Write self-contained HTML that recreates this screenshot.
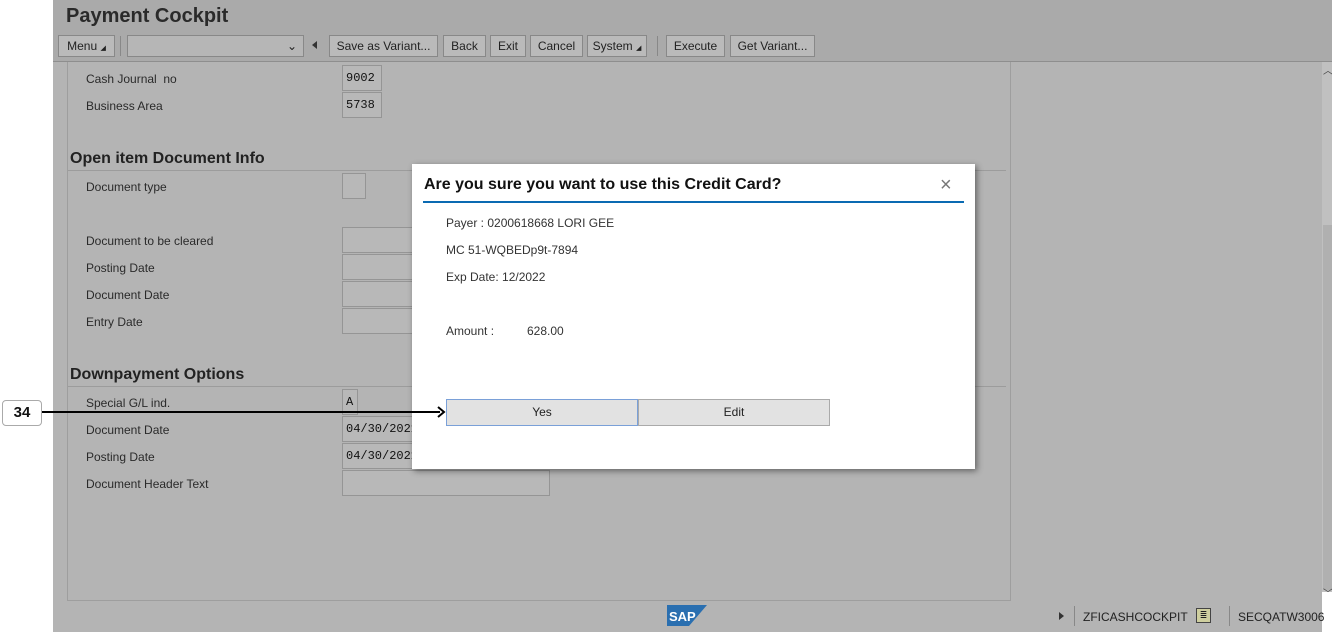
<!DOCTYPE html>
<html><head><meta charset="utf-8"><style>
*{margin:0;padding:0;box-sizing:border-box}
body{width:1332px;height:632px;position:relative;overflow:hidden;background:#fff;font-family:"Liberation Sans",Arial,sans-serif;font-size:12px;color:#222}
.a{position:absolute}
.hdr{left:53px;top:0;width:1279px;height:62px;background:#aaa;border-bottom:1px solid #8e8e8e}
.main{left:53px;top:62px;width:1269px;height:570px;background:#b4b4b4}
.btn{position:absolute;top:35px;height:22px;border:1px solid #888;background:#bababa;font-size:12px;line-height:20px;text-align:center;color:#222}
.lbl{position:absolute;left:86px;font-size:12px;color:#2a2a2a}
.inp{position:absolute;left:342px;height:26px;border:1px solid #959595;background:#b8b8b8;font-family:"Liberation Mono",monospace;font-size:12px;line-height:24px;padding-left:3px;color:#111}
.h{position:absolute;left:70px;font-size:16px;font-weight:bold;color:#222}
.hl{position:absolute;left:68px;width:938px;height:1px;background:#9c9c9c}
.dl{position:absolute;left:446px;font-size:12px;color:#333}
</style></head><body>
<div class="a hdr"></div>
<div class="a" style="left:66px;top:5px;font-size:20px;font-weight:bold;color:#2a2a2a">Payment Cockpit</div>
<div class="btn" style="left:58px;width:57px">Menu <span style="font-size:7px">◢</span></div>
<div class="a" style="left:120px;top:36px;width:1px;height:20px;background:#888"></div>
<div class="btn" style="left:127px;width:177px;background:#b6b6b6;text-align:right;padding-right:6px">⌄</div>
<div class="a" style="left:312px;top:41px;width:0;height:0;border-top:4px solid transparent;border-bottom:4px solid transparent;border-right:5px solid #333"></div>
<div class="btn" style="left:329px;width:109px">Save as Variant...</div>
<div class="btn" style="left:443px;width:43px">Back</div>
<div class="btn" style="left:490px;width:36px">Exit</div>
<div class="btn" style="left:530px;width:53px">Cancel</div>
<div class="btn" style="left:587px;width:60px">System <span style="font-size:7px">◢</span></div>
<div class="a" style="left:657px;top:36px;width:1px;height:20px;background:#888"></div>
<div class="btn" style="left:666px;width:59px">Execute</div>
<div class="btn" style="left:730px;width:85px">Get Variant...</div>
<div class="a main"></div>
<div class="a" style="left:67px;top:62px;width:944px;height:539px;border-left:1px solid #9e9e9e;border-right:1px solid #9e9e9e;border-bottom:1px solid #9e9e9e"></div>
<div class="a" style="left:1322px;top:62px;width:10px;height:530px;background:#c0c0c0"></div>
<div class="a" style="left:1323px;top:225px;width:9px;height:365px;background:#b0b0b0"></div>
<div class="a" style="left:1323px;top:62px;font-size:10px;color:#444">︿</div>
<div class="a" style="left:1323px;top:585px;font-size:10px;color:#444">﹀</div>
<div class="lbl" style="top:72px">Cash Journal &nbsp;no</div><div class="inp" style="top:65px;width:40px">9002</div>
<div class="lbl" style="top:99px">Business Area</div><div class="inp" style="top:92px;width:40px">5738</div>
<div class="h" style="top:150px">Open item Document Info</div><div class="hl" style="top:170px"></div>
<div class="lbl" style="top:180px">Document type</div><div class="inp" style="top:173px;width:24px"></div>
<div class="lbl" style="top:234px">Document to be cleared</div><div class="inp" style="top:227px;width:80px"></div>
<div class="lbl" style="top:261px">Posting Date</div><div class="inp" style="top:254px;width:80px"></div>
<div class="lbl" style="top:288px">Document Date</div><div class="inp" style="top:281px;width:80px"></div>
<div class="lbl" style="top:315px">Entry Date</div><div class="inp" style="top:308px;width:80px"></div>
<div class="h" style="top:366px">Downpayment Options</div><div class="hl" style="top:386px"></div>
<div class="lbl" style="top:396px">Special G/L ind.</div><div class="inp" style="top:389px;width:16px">A</div>
<div class="lbl" style="top:423px">Document Date</div><div class="inp" style="top:416px;width:80px">04/30/2021</div>
<div class="lbl" style="top:450px">Posting Date</div><div class="inp" style="top:443px;width:80px">04/30/2021</div>
<div class="lbl" style="top:477px">Document Header Text</div><div class="inp" style="top:470px;width:208px"></div>
<svg class="a" style="left:667px;top:605px" width="40" height="21"><polygon points="0,0 40,0 22,21 0,21" fill="#2a6fb0"/><text x="2" y="16" font-family="Liberation Sans" font-weight="bold" font-size="13" fill="#fff">SAP</text></svg>
<div class="a" style="left:1059px;top:612px;width:0;height:0;border-top:4px solid transparent;border-bottom:4px solid transparent;border-left:5px solid #333"></div>
<div class="a" style="left:1074px;top:606px;width:1px;height:20px;background:#888"></div>
<div class="a" style="left:1083px;top:610px;font-size:12px;color:#222">ZFICASHCOCKPIT</div>
<div class="a" style="left:1196px;top:608px;width:15px;height:15px;border:1px solid #444;background:#cfcf9f;font-size:9px;line-height:12px;text-align:center">≣</div>
<div class="a" style="left:1229px;top:606px;width:1px;height:20px;background:#888"></div>
<div class="a" style="left:1238px;top:610px;font-size:12px;color:#222">SECQATW3006</div>
<div class="a" style="left:412px;top:164px;width:563px;height:305px;background:#fff;box-shadow:2px 2px 6px rgba(0,0,0,.45)"></div>
<div class="a" style="left:424px;top:176px;font-size:16px;font-weight:bold;color:#111">Are you sure you want to use this Credit Card?</div>
<div class="a" style="left:940px;top:174px;font-size:20px;color:#777">×</div>
<div class="a" style="left:423px;top:201px;width:541px;height:2px;background:#0a6ab2"></div>
<div class="dl" style="top:216px">Payer : 0200618668 LORI GEE</div>
<div class="dl" style="top:243px">MC 51-WQBEDp9t-7894</div>
<div class="dl" style="top:270px">Exp Date: 12/2022</div>
<div class="dl" style="top:324px">Amount :</div>
<div class="dl" style="top:324px;left:527px">628.00</div>
<div class="a" style="left:446px;top:399px;width:192px;height:27px;background:#e2e2e2;border:1px solid #7aa0d8;text-align:center;line-height:25px;color:#222">Yes</div>
<div class="a" style="left:638px;top:399px;width:192px;height:27px;background:#e2e2e2;border:1px solid #aaa;text-align:center;line-height:25px;color:#222">Edit</div>
<div class="a" style="left:2px;top:400px;width:40px;height:26px;border:1px solid #aaa;border-radius:4px;background:#fff;font-size:15px;font-weight:bold;text-align:center;line-height:24px;color:#111">34</div>
<div class="a" style="left:42px;top:411px;width:398px;height:2px;background:#000"></div>
<svg class="a" style="left:436px;top:405px" width="10" height="14"><polyline points="2,2 8,7 2,12" fill="none" stroke="#000" stroke-width="2"/></svg>
</body></html>
